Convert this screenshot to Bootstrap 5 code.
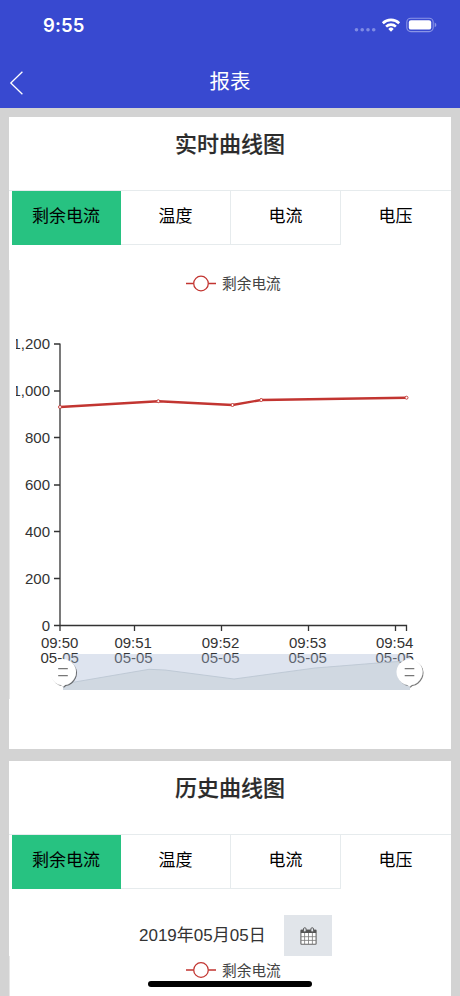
<!DOCTYPE html>
<html lang="zh-CN">
<head>
<meta charset="utf-8">
<meta name="viewport" content="width=device-width, initial-scale=1">
<title>报表</title>
<link href="https://cdn.jsdelivr.net/npm/bootstrap@5.3.0/dist/css/bootstrap.min.css" rel="stylesheet">
<style>
html,body{height:996px;overflow:hidden}
body{background:#d3d3d3;color:#333;font-family:"Liberation Sans","Noto Sans CJK SC",sans-serif}
.app-head{height:108px;background:#3849d0}
.status-row{height:50px;padding:0 23px 0 43px}
.clock{font:600 18.5px/52px Inter,sans-serif;letter-spacing:.1px}
.title-row{height:58px}
.page-title{font-size:20.5px;line-height:64px;font-weight:400}
.back-link{left:9px;top:20px;line-height:0}
.panel{margin:0 9px;width:442px;border-radius:0;border:0}
.panel-live{height:632px;margin-top:9px;margin-bottom:12px}
.panel-history{height:235px}
.panel-title{height:74px;font-size:22px;line-height:56px;font-weight:500;color:#2b2b2b;-webkit-text-stroke:.2px #2b2b2b;border-bottom:1px solid #e6ebed}
.tab-row{padding-left:3px;height:54px}
.tab-item{flex:1 1 0;height:54px;font-size:17px;line-height:52px;color:#000;text-align:center;border-right:1px solid #e6ebed;border-bottom:1px solid #e6ebed;text-decoration:none}
.tab-item.is-on{background:#27c281;border-color:#27c281;flex:0 0 109px}
.tab-item:last-child{border-color:transparent}
svg{display:block}
svg text{font-family:"Liberation Sans","Noto Sans CJK SC",sans-serif}
.date-row{margin-top:26px;height:41px;padding-left:130px}
.date-text{font-size:17px;width:145px;line-height:41px;white-space:nowrap}
.date-btn{width:48px;height:41px;background:#e1e5ea;border:0;border-radius:0}
.home-bar{left:148px;top:981px;width:164px;height:6px;border-radius:3px;background:#000}
</style>
</head>
<body>
<header class="app-head text-white">
  <div class="status-row d-flex justify-content-between align-items-center">
    <span class="clock">9:55</span>
    <svg width="84" height="20" viewBox="353 15 84 20">
      <g fill="#7f8be4"><circle cx="356.5" cy="29.7" r="1.8"/><circle cx="362.2" cy="29.7" r="1.8"/><circle cx="368" cy="29.7" r="1.8"/><circle cx="373.7" cy="29.7" r="1.8"/></g>
      <g fill="none" stroke="#fff" stroke-width="2.6"><path d="M382.8 23.2a11.8 11.8 0 0 1 16.4 0"/><path d="M386.1 26.6a7 7 0 0 1 9.8 0"/></g>
      <path d="M388.3 28.9a3.9 3.9 0 0 1 5.4 0L391 31.7z" fill="#fff"/>
      <rect x="406.8" y="18.2" width="26.4" height="13.4" rx="4" fill="none" stroke="#8a95e6" stroke-width="1.1"/>
      <rect x="408.8" y="20.2" width="22.4" height="9.4" rx="2.2" fill="#fff"/>
      <path d="M434.7 22.6q1.7.7 1.7 2.3t-1.7 2.3z" fill="#8a95e6"/>
    </svg>
  </div>
  <div class="title-row position-relative text-center">
    <a class="back-link position-absolute" href="#" aria-label="返回"><svg width="16" height="26" viewBox="0 0 16 26"><path d="M13.4 1.7 1.8 13l11.6 11.3" fill="none" stroke="#fff" stroke-width="1.3"/></svg></a>
    <h1 class="page-title m-0">报表</h1>
  </div>
</header>
<main>
  <section class="card panel panel-live">
    <h2 class="panel-title text-center m-0">实时曲线图</h2>
    <nav class="tab-row d-flex"><a class="tab-item is-on">剩余电流</a><a class="tab-item">温度</a><a class="tab-item">电流</a><a class="tab-item">电压</a></nav>
    <svg width="442" height="503" viewBox="9 245 442 503">
      <defs>
        <clipPath id="canvasEdge"><rect x="16" y="246" width="440" height="502"/></clipPath>
        <filter id="knobShadow" x="-30%" y="-30%" width="170%" height="170%"><feDropShadow dx="1" dy="1" stdDeviation=".6" flood-color="#333" flood-opacity=".65"/></filter>
        <g id="knob"><path d="M-2 12.900A13 13 0 1 1 2 12.900L0 14.800z" fill="#fff" filter="url(#knobShadow)"/><path d="M-4.800-3.300h9.600M-4.800 3.600h9.600" stroke="#777" stroke-width="1.200"/></g>
      </defs>
      <path d="M9.500 270V699" stroke="#e7e7e7"/>
      <g fill="none" stroke="#c23531" stroke-width="1.300"><path d="M186 283.500h7.500M208.500 283.500h7.500"/><circle cx="201" cy="283.500" r="7.300"/></g>
      <text x="222" y="289" font-size="14.700" fill="#444">剩余电流</text>
      <path d="M60 343.500V631M54 625.500H406.500V631M54 344h6M54 391h6M54 437.500h6M54 485h6M54 531.500h6M54 578.500h6M134.500 625.500v5.500M221.500 625.500v5.500M308.500 625.500v5.500M395.500 625.500v5.500" fill="none" stroke="#333" stroke-width="1.300"/>
      <g font-size="15" fill="#333" text-anchor="end" clip-path="url(#canvasEdge)"><text x="50" y="349">1,200</text><text x="50" y="396">1,000</text><text x="50" y="443">800</text><text x="50" y="490">600</text><text x="50" y="537">400</text><text x="50" y="584">200</text><text x="50" y="631">0</text></g>
      <g font-size="15" fill="#333" text-anchor="middle"><text x="59.700" y="648">09:50</text><text x="133.200" y="648">09:51</text><text x="220.500" y="648">09:52</text><text x="307.700" y="648">09:53</text><text x="394.700" y="648">09:54</text><text x="59.700" y="662.600">05-05</text><text x="133.500" y="662.600">05-05</text><text x="220.500" y="662.600">05-05</text><text x="307.700" y="662.600">05-05</text><text x="394.700" y="662.600">05-05</text></g>
      <path d="M60 407 158.300 401.200 232.500 405 261.200 400 406.500 397.700" fill="none" stroke="#c23531" stroke-width="2.400"/>
      <g fill="#fff" stroke="#c23531" stroke-width=".9"><circle cx="60" cy="407" r="1.500"/><circle cx="158.300" cy="401.200" r="1.500"/><circle cx="232.500" cy="405" r="1.500"/><circle cx="261.200" cy="400" r="1.500"/><circle cx="406.500" cy="397.700" r="1.500"/></g>
      <rect x="63" y="654" width="347" height="36" fill="#a7b7d6" fill-opacity=".38"/>
      <path d="M63 684 149 669.300l16 .7 69 9 81-11 75-6 20-1V690H63z" fill="#b7c4c8" fill-opacity=".35"/>
      <path d="M63 684 149 669.300l16 .7 69 9 81-11 75-6 20-1" fill="none" stroke="#b9c4d0" stroke-width=".8"/>
      <use href="#knob" x="63" y="672"/><use href="#knob" x="409.500" y="672"/>
    </svg>
  </section>
  <section class="card panel panel-history">
    <h2 class="panel-title text-center m-0">历史曲线图</h2>
    <nav class="tab-row d-flex"><a class="tab-item is-on">剩余电流</a><a class="tab-item">温度</a><a class="tab-item">电流</a><a class="tab-item">电压</a></nav>
    <div class="date-row d-flex">
      <span class="date-text">2019年05月05日</span>
      <button class="date-btn d-flex align-items-center justify-content-center p-0" type="button" aria-label="选择日期">
        <svg width="17" height="18" viewBox="0 0 17 18"><rect x=".9" y="3" width="15.200" height="14.200" rx=".7" fill="#fff" stroke="#666" stroke-width="1.100"/><path d="M.9 3h15.200v3H.9z" fill="#555"/><path d="M4.600 6v11M8.500 6v11M12.400 6v11M1 9.700h15M1 13.400h15" stroke="#777" stroke-width=".8"/><rect x="3.500" y=".7" width="2.600" height="4.300" rx="1.300" fill="#e1e5ea" stroke="#555" stroke-width=".9"/><rect x="10.900" y=".7" width="2.600" height="4.300" rx="1.300" fill="#e1e5ea" stroke="#555" stroke-width=".9"/></svg>
      </button>
    </div>
    <svg width="442" height="40" viewBox="9 956 442 40">
      <path d="M9.500 956V996" stroke="#e7e7e7"/>
      <g fill="none" stroke="#c23531" stroke-width="1.300"><path d="M186 970h7.500M208.500 970h7.500"/><circle cx="201" cy="970" r="7.300"/></g>
      <text x="222" y="975.500" font-size="14.700" fill="#444">剩余电流</text>
    </svg>
  </section>
</main>
<div class="home-bar position-absolute"></div>
<script src="https://cdn.jsdelivr.net/npm/bootstrap@5.3.0/dist/js/bootstrap.bundle.min.js"></script>
</body>
</html>
